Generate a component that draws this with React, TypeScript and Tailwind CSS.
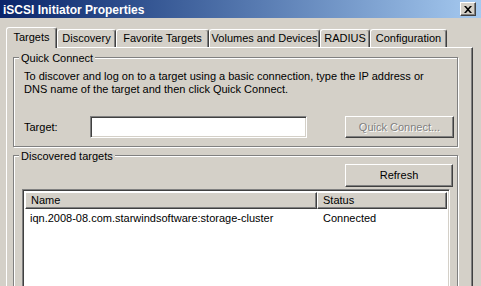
import React from "react";

const raised =
  "border border-t-white border-l-white border-r-[#404040] border-b-[#404040] shadow-[inset_-1px_-1px_0_#808080,inset_1px_1px_0_#d4d0c8]";
const sunken =
  "border border-t-[#808080] border-l-[#808080] border-r-white border-b-white shadow-[inset_1px_1px_0_#404040,inset_-1px_-1px_0_#d4d0c8]";

function Tab({ label, width, selected }: { label: string; width: string; selected?: boolean }) {
  if (selected) {
    return (
      <div
        className={`relative z-10 -mb-px h-[21px] ${width} bg-[#d4d0c8] border-t border-l border-r border-t-white border-l-white border-r-[#404040] rounded-t-[3px] shadow-[inset_-1px_0_0_#808080] flex justify-center pt-[3px]`}
      >
        {label}
      </div>
    );
  }
  return (
    <div
      className={`h-[18px] ${width} border-t border-l border-r border-t-white border-l-white border-r-[#404040] rounded-t-[3px] shadow-[inset_-1px_0_0_#808080] flex justify-center pt-[2px] whitespace-nowrap`}
    >
      {label}
    </div>
  );
}

function GroupBox({
  label,
  className,
  children,
}: {
  label: string;
  className: string;
  children: React.ReactNode;
}) {
  return (
    <div
      className={`relative border border-[#808080] shadow-[inset_1px_1px_0_#fff,1px_1px_0_#fff] ${className}`}
    >
      <span className="absolute -top-[6px] left-[5px] px-[2px] bg-[#d4d0c8] leading-[13px]">{label}</span>
      {children}
    </div>
  );
}

export default function App() {
  return (
    <div className="w-[481px] h-[286px] overflow-hidden bg-[#d4d0c8] text-[11px] leading-[13px] text-black font-['Tahoma','Liberation_Sans',sans-serif]">
      {/* Title bar */}
      <div className="h-[18px] flex items-center justify-between pl-[3px] pr-[5px] bg-gradient-to-r from-[#0a246a] to-[#a6caf0]">
        <span className="text-white font-bold text-[12px] leading-[14px] pt-[1px]">iSCSI Initiator Properties</span>
        <div className={`w-[16px] h-[14px] bg-[#d4d0c8] ${raised} flex items-center justify-center`}>
          <svg width="8" height="7" viewBox="0 0 8 7">
            <path d="M0 0h2l2 2.3L6 0h2L5 3.5 8 7H6L4 4.7 2 7H0l3-3.5z" fill="#000" />
          </svg>
        </div>
      </div>

      {/* Tabs */}
      <div className="mt-[9px] ml-[6px] flex items-end h-[20px]">
        <Tab label="Targets" width="w-[51px]" selected />
        <Tab label="Discovery" width="w-[59px]" />
        <Tab label="Favorite Targets" width="w-[93px]" />
        <Tab label="Volumes and Devices" width="w-[111px]" />
        <Tab label="RADIUS" width="w-[50px]" />
        <Tab label="Configuration" width="w-[77px]" />
      </div>

      {/* Tab panel */}
      <div className="ml-[6px] w-[467px] h-[300px] border-t border-l border-r border-t-white border-l-white border-r-[#404040] shadow-[inset_-1px_0_0_#808080] pt-[9px] pl-[6px]">
        <GroupBox label="Quick Connect" className="w-[445px] h-[90px] pt-[12px] pl-[10px]">
          <div className="w-[420px]">
            To discover and log on to a target using a basic connection, type the IP address or
            <br />
            DNS name of the target and then click Quick Connect.
          </div>
          <div className="mt-[20px] flex items-center">
            <span className="w-[66px]">Target:</span>
            <div className={`w-[217px] h-[22px] bg-white ${sunken}`} />
            <button
              className={`ml-[38px] w-[109px] h-[22px] ${raised} text-[#808080] [text-shadow:1px_1px_0_#fff]`}
            >
              Quick Connect...
            </button>
          </div>
        </GroupBox>

        <GroupBox label="Discovered targets" className="mt-[8px] w-[445px] h-[200px] pt-[8px] pl-[8px]">
          <div className="flex justify-end pr-[4px]">
            <button className={`w-[108px] h-[23px] ${raised}`}>Refresh</button>
          </div>
          <div className={`mt-[2px] w-[428px] h-[120px] bg-white ${sunken} p-[2px]`}>
            <div className="flex h-[17px]">
              <div className={`w-[292px] ${raised} bg-[#d4d0c8] pl-[5px] flex items-center`}>Name</div>
              <div className={`flex-1 ${raised} bg-[#d4d0c8] pl-[5px] flex items-center`}>Status</div>
            </div>
            <div className="flex h-[16px] items-center mt-[1px]">
              <span className="w-[292px] pl-[5px]">iqn.2008-08.com.starwindsoftware:storage-cluster</span>
              <span className="pl-[6px]">Connected</span>
            </div>
          </div>
        </GroupBox>
      </div>
    </div>
  );
}
